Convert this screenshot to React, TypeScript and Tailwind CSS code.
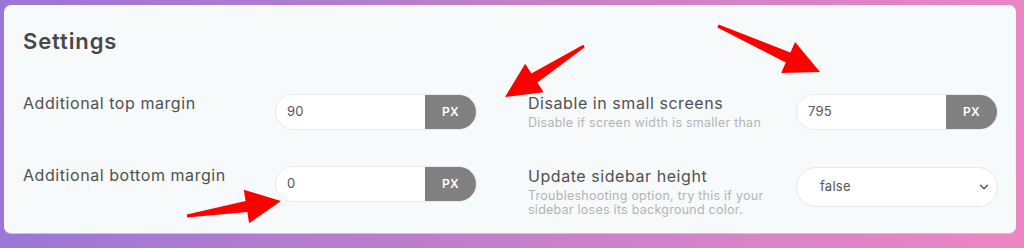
import React from "react";
import { ChevronDown } from "lucide-react";

type Pt = [number, number];

// tapered annotation arrow, tail -> tip
function arrowPoints(tail: Pt, tip: Pt, headLen = 35, headHalf = 17, shaftHalf = 5.5, tailHalf = 1.5) {
  const dx = tip[0] - tail[0];
  const dy = tip[1] - tail[1];
  const len = Math.hypot(dx, dy);
  const ux = dx / len;
  const uy = dy / len;
  const px = -uy;
  const py = ux;
  const bx = tip[0] - ux * headLen;
  const by = tip[1] - uy * headLen;
  const pts: Pt[] = [
    [tail[0] + px * tailHalf, tail[1] + py * tailHalf],
    [bx + px * shaftHalf, by + py * shaftHalf],
    [bx + px * headHalf, by + py * headHalf],
    tip,
    [bx - px * headHalf, by - py * headHalf],
    [bx - px * shaftHalf, by - py * shaftHalf],
    [tail[0] - px * tailHalf, tail[1] - py * tailHalf],
  ];
  return pts.map((p) => `${p[0].toFixed(1)},${p[1].toFixed(1)}`).join(" ");
}

function PxInput({ value }: { value: string }) {
  return (
    <div className="flex h-[36px] w-[202px] shrink-0 overflow-hidden rounded-full border border-[#e6e8ea] bg-white">
      <div className="flex flex-1 items-center pl-[11px] text-[13px] tracking-[0.02em] text-[#555]">{value}</div>
      <div className="flex w-[51px] items-center justify-center bg-[#808080] text-[12px] font-semibold tracking-[0.03em] text-white">
        PX
      </div>
    </div>
  );
}

function Label({ title, hint }: { title: string; hint?: string }) {
  return (
    <div className="flex-1">
      <div className="text-[16px] leading-[18px] tracking-[0.035em] text-[#505050]">{title}</div>
      {hint && (
        <div className="mt-[4px] w-[240px] text-[12.5px] leading-[14.5px] tracking-[0.02em] text-[#b4b4b4]">
          {hint}
        </div>
      )}
    </div>
  );
}

export default function App() {
  return (
    <div
      className="relative h-[248px] w-[1024px] bg-[linear-gradient(100deg,#9876d8_0%,#c47fcb_50%,#ef86c4_100%)] pl-[4px] pt-[5px]"
      style={{ fontFamily: "Inter, 'Noto Sans', sans-serif" }}
    >
      <div className="h-[228px] w-[1012px] rounded-[7px] bg-[#f7fafb] pl-[19px] pt-[22px] shadow-[0_1px_0_#c9c3d4]">
        <h2 className="text-[22px] font-semibold leading-[28px] tracking-[0.04em] text-[#484848]">Settings</h2>

        <div className="mt-[39px] flex gap-[51px]">
          <div className="flex w-[454px] flex-col gap-9">
            <div className="flex items-start">
              <Label title="Additional top margin" />
              <PxInput value="90" />
            </div>
            <div className="flex items-start">
              <Label title="Additional bottom margin" />
              <PxInput value="0" />
            </div>
          </div>

          <div className="flex w-[470px] flex-col gap-9">
            <div className="flex items-start">
              <Label title="Disable in small screens" hint="Disable if screen width is smaller than" />
              <PxInput value="795" />
            </div>
            <div className="flex items-start">
              <Label
                title="Update sidebar height"
                hint="Troubleshooting option, try this if your sidebar loses its background color."
              />
              <div className="flex h-[40px] w-[202px] shrink-0 items-center justify-between rounded-full border border-[#e8e8ec] bg-white pl-[23px] pr-[6px] text-[13px] tracking-[0.02em] text-[#555]">
                <span>false</span>
                <ChevronDown size={14} strokeWidth={2.5} className="text-[#555]" />
              </div>
            </div>
          </div>
        </div>
      </div>

      <svg className="pointer-events-none absolute inset-0" width="1024" height="248" viewBox="0 0 1024 248">
        <polygon points={arrowPoints([584, 46], [505, 97])} fill="#ff0000" />
        <polygon points={arrowPoints([718, 26], [820, 72])} fill="#ff0000" />
        <polygon points={arrowPoints([187, 216], [281, 201])} fill="#ff0000" />
      </svg>
    </div>
  );
}
